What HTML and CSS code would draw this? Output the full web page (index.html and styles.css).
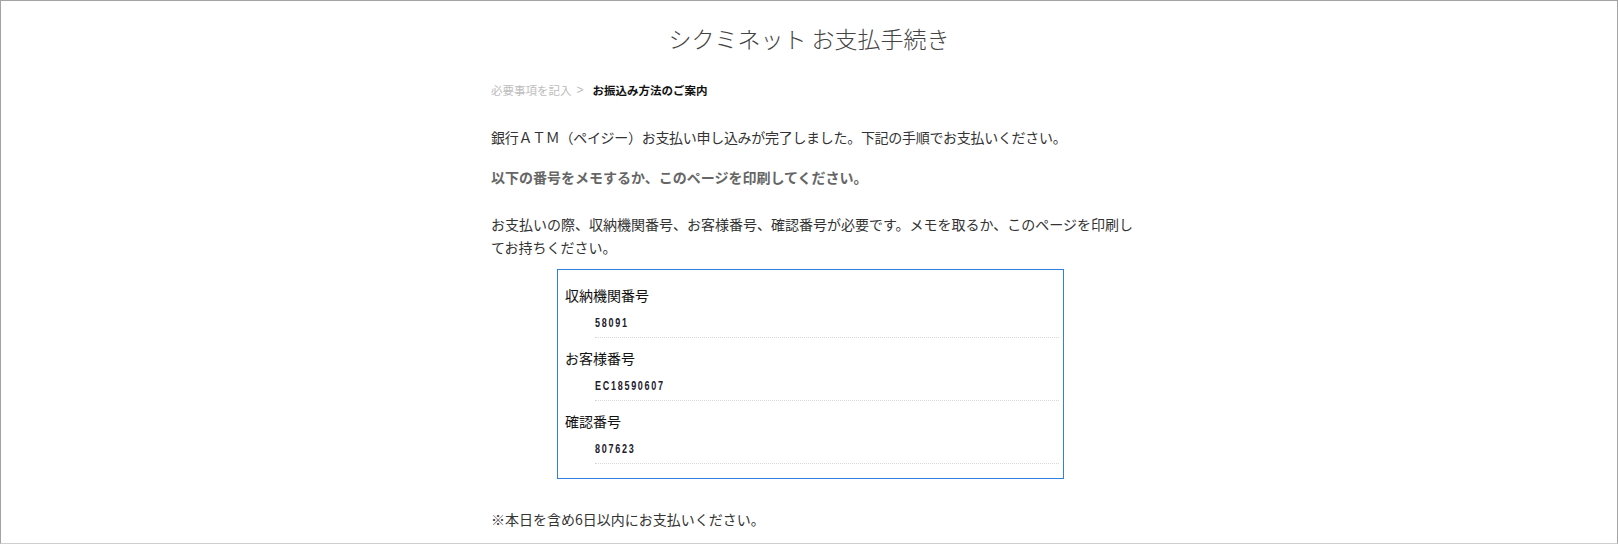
FILE: index.html
```html
<!DOCTYPE html>
<html lang="ja">
<head>
<meta charset="utf-8">
<title>シクミネット お支払手続き</title>
<link rel="stylesheet" href="styles.css">
</head>
<body>
<div class="frame">
  <h1 class="title">シクミネット お支払手続き</h1>
  <div class="content">
    <div class="crumbs"><span class="crumb-done">必要事項を記入</span><span class="crumb-sep">&gt;</span><span class="crumb-current">お振込み方法のご案内</span></div>
    <p class="lead">銀行ＡＴＭ（ペイジー）お支払い申し込みが完了しました。下記の手順でお支払いください。</p>
    <p class="notice">以下の番号をメモするか、このページを印刷してください。</p>
    <p class="desc">お支払いの際、収納機関番号、お客様番号、確認番号が必要です。メモを取るか、このページを印刷してお持ちください。</p>
    <div class="numbers">
      <div class="row">
        <div class="label">収納機関番号</div>
        <div class="value"><span class="digits">58091</span></div>
      </div>
      <div class="row">
        <div class="label">お客様番号</div>
        <div class="value"><span class="digits">EC18590607</span></div>
      </div>
      <div class="row">
        <div class="label">確認番号</div>
        <div class="value"><span class="digits">807623</span></div>
      </div>
    </div>
    <p class="foot">※本日を含め6日以内にお支払いください。</p>
  </div>
</div>
</body>
</html>
```
FILE: styles.css
```css
html, body {
  margin: 0;
  padding: 0;
  background: #fff;
}
body {
  font-family: "Noto Sans CJK JP", "Noto Sans", sans-serif;
  color: #333;
}
.frame {
  box-sizing: border-box;
  width: 1618px;
  height: 544px;
  border: 1px solid #a3a3a3;
  border-bottom-color: #cfcfcf;
  overflow: hidden;
}
.title {
  margin: 22px 0 0;
  font-size: 23px;
  line-height: 30px;
  font-weight: 300;
  color: #444;
  text-align: center;
}
.content {
  width: 652px;
  margin-left: calc(50% - 318px);
}
.crumbs {
  margin-top: 28px;
  font-size: 11.5px;
  line-height: 18px;
  display: flex;
  align-items: center;
}
.crumb-done {
  color: #bdbdbd;
}
.crumb-sep {
  color: #bdbdbd;
  margin: 0 9px 0 5px;
  font-family: "Liberation Sans", sans-serif;
  font-size: 12px;
}
.crumb-current {
  color: #111;
  font-weight: 700;
}
.lead {
  margin: 27px 0 0;
  font-size: 14px;
  line-height: 22px;
  color: #333;
  letter-spacing: -0.3px;
}
.notice {
  margin: 18px 0 0;
  font-size: 14px;
  line-height: 22px;
  font-weight: 700;
  color: #666;
}
.desc {
  margin: 25px 0 0;
  font-size: 14px;
  line-height: 23px;
  color: #333;
}
.numbers {
  box-sizing: border-box;
  width: 507px;
  margin: 10px 0 0 66px;
  border: 1px solid #2f80e0;
  padding: 15px 4px 14px 7px;
}
.row + .row {
  margin-top: 10px;
}
.label {
  font-size: 14px;
  line-height: 20px;
  color: #111;
}
.value {
  display: flex;
  align-items: center;
  height: 20px;
  margin: 8px 0 0 30px;
  padding-bottom: 4px;
  border-bottom: 1px dotted #d8d8d8;
}
.digits {
  display: block;
  font-family: "Liberation Sans", "DejaVu Sans", sans-serif;
  font-weight: 700;
  font-size: 12px;
  line-height: 14px;
  letter-spacing: 2.3px;
  color: #221a2a;
  transform: scaleX(0.75);
  transform-origin: left center;
}
.foot {
  margin: 29px 0 0;
  font-size: 14px;
  line-height: 22px;
  color: #333;
}
```
